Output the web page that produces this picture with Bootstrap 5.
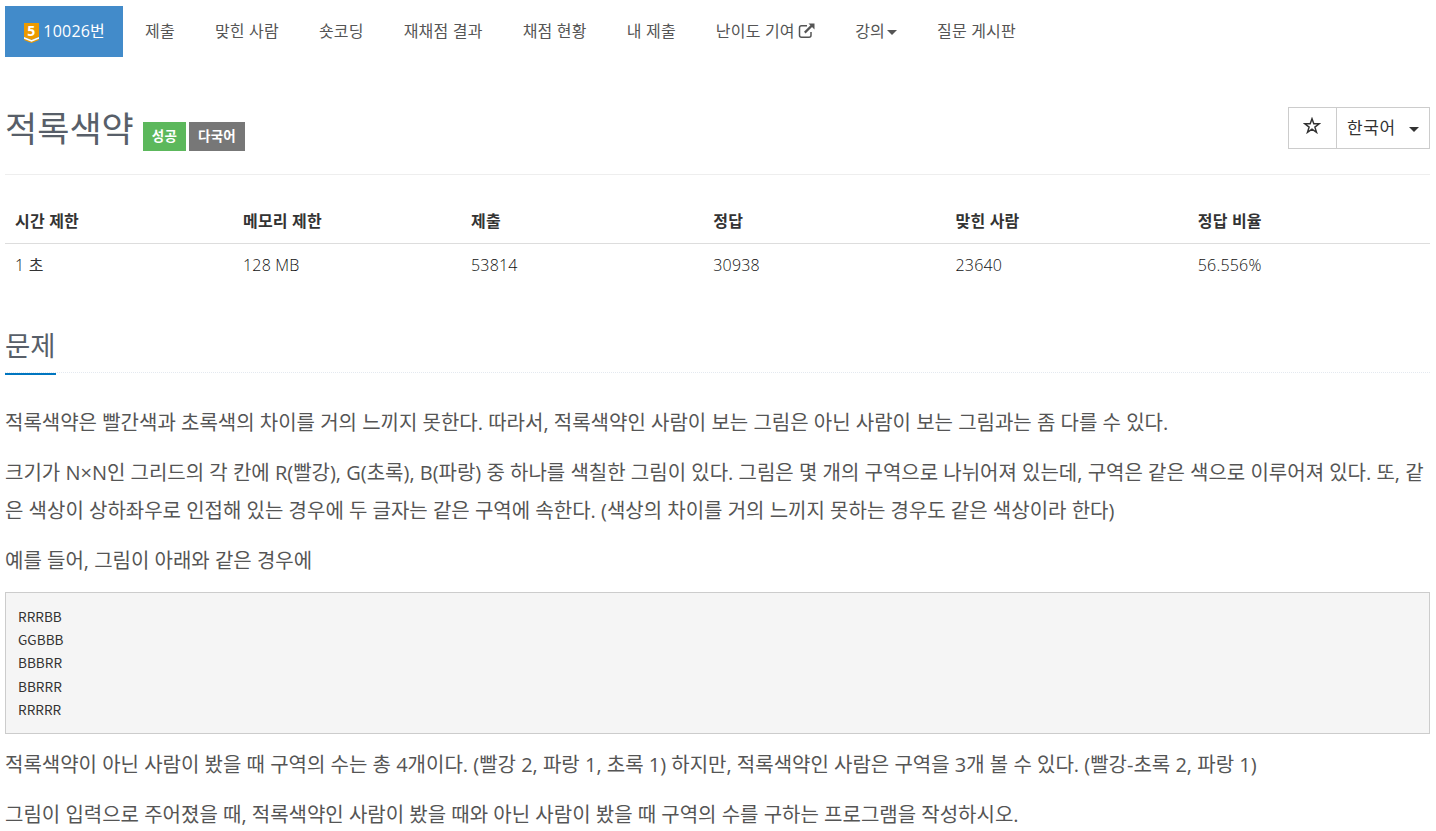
<!DOCTYPE html>
<html lang="ko">

<head>
  <meta charset="UTF-8">
  <meta name="viewport" content="width=device-width, initial-scale=1.0">
  <title>10026번: 적록색약</title>
  <link href="https://cdn.jsdelivr.net/npm/bootstrap@5.3.0/dist/css/bootstrap.min.css" rel="stylesheet">
  <style>
    body {
      font-family: "Open Sans", "Noto Sans CJK KR", sans-serif;
      font-size: 16px;
      color: #333;
      overflow: hidden;
    }

    .page-wrap {
      padding: 6px 6px 0 5px;
    }

    .problem-menu {
      --bs-nav-pills-border-radius: 0;
      --bs-nav-pills-link-active-bg: #428bca;
      --bs-nav-link-padding-x: 18px;
      --bs-nav-link-padding-y: 0;
      --bs-nav-link-color: #555;
      gap: 4px;
      letter-spacing: .2px;
    }

    .problem-menu .nav-link {
      height: 51px;
      line-height: 50px;
      white-space: nowrap;
    }

    .problem-menu .tier-icon {
      margin: 0 -1px 0 1px;
      overflow: visible;
      vertical-align: -6px;
    }

    .problem-menu .link-icon {
      margin-left: -1px;
      vertical-align: -2px;
    }

    .caret {
      display: inline-block;
      border: 5px solid transparent;
      border-top-color: currentColor;
      border-bottom: 0;
      vertical-align: middle;
    }

    .problem-menu .caret {
      margin-left: 2px;
    }

    .title-bar {
      height: 118px;
      border-bottom: 1px solid #eee;
    }

    .title-bar h1 {
      font-size: 35px;
      line-height: 40px;
      color: #585f69;
      margin: 52px 9px 0 0;
    }

    .title-label {
      font-size: 13.5px;
      font-weight: 600;
      line-height: 29px;
      height: 29px;
      padding: 0 9px;
      letter-spacing: .2px;
      color: #fff;
      margin: 65px 3px 0 0;
    }

    .label-ac {
      background: #5cb85c;
    }

    .label-lang {
      background: #777;
    }

    .title-bar .btn-group {
      margin-top: 50px;
    }

    .title-bar .btn {
      --bs-btn-border-color: #ccc;
      --bs-btn-color: #333;
      --bs-btn-border-radius: 0;
      --bs-btn-padding-y: 0;
      --bs-btn-padding-x: 10px;
      flex: none;
      height: 42px;
    }

    .title-bar .fav-btn {
      width: 49px;
      padding: 0 11px 2px 9px;
    }

    .title-bar .fav-btn svg {
      vertical-align: -1px;
    }

    .title-bar .lang-btn {
      width: 94px;
      font-size: 17px;
      text-align: left;
      letter-spacing: .6px;
      white-space: nowrap;
    }

    .lang-btn .caret {
      margin-left: 13px;
    }

    .info-table {
      --bs-table-color: #333;
      margin-top: 23px;
      table-layout: fixed;
    }

    .info-table th,
    .info-table td {
      padding: 0 10px;
      line-height: 24px;
      border: 0;
      vertical-align: middle;
    }

    .info-table th {
      height: 45px;
      padding-top: 2px;
      font-weight: 700;
      letter-spacing: .2px;
      border-bottom: 1px solid #ddd;
    }

    .info-table td {
      height: 43px;
      letter-spacing: .2px;
    }

    .info-table .fw-light {
      --bs-table-color: #111;
      color: #111;
    }

    .headline {
      margin-top: 37px;
      height: 50px;
      border-bottom: 1px dotted #e4e9f0;
    }

    .headline h2 {
      display: inline-block;
      height: 52px;
      margin: 0;
      font-size: 27.5px;
      line-height: 46px;
      color: #585f69;
      border-bottom: 2px solid #0076c0;
    }

    .problem-text {
      margin-top: 31px;
      font-size: 20px;
      line-height: 38px;
      color: #555;
    }

    .problem-text p {
      margin: 0 0 12px;
      white-space: nowrap;
    }

    .problem-text pre {
      height: 142px;
      margin: 0 0 12px;
      padding: 12px;
      border: 1px solid #ccc;
      background: #f5f5f5;
      color: #333;
      font: 400 13.6px/23.2px "Noto Sans CJK KR", sans-serif;
    }
  </style>
</head>

<body>
  <div class="page-wrap">
    <ul class="nav nav-pills problem-menu">
      <li class="nav-item">
        <a class="nav-link active" href="#"><svg class="tier-icon" width="16" height="20" viewBox="0 0 16 20">
            <path d="M0 0h15v14l-7.5 3L0 14z" fill="#ec9a00" />
            <path d="M0 15.5l7.5 3 7.5-3V17L7.5 20 0 17z" fill="#ec9a00" />
            <path d="M0 14l7.5 3 7.5-3v1.8l-7.5 3-7.5-3z" fill="#fff" />
            <text x="7.3" y="12.5" text-anchor="middle" font-family="Open Sans" font-size="14" font-weight="700" fill="#fff">5</text>
          </svg> 10026번</a>
      </li>
      <li class="nav-item"><a class="nav-link" href="#">제출</a></li>
      <li class="nav-item"><a class="nav-link" href="#">맞힌 사람</a></li>
      <li class="nav-item"><a class="nav-link" href="#">숏코딩</a></li>
      <li class="nav-item"><a class="nav-link" href="#">재채점 결과</a></li>
      <li class="nav-item"><a class="nav-link" href="#">채점 현황</a></li>
      <li class="nav-item"><a class="nav-link" href="#">내 제출</a></li>
      <li class="nav-item">
        <a class="nav-link" href="#">난이도 기여 <svg class="link-icon" width="17" height="16" viewBox="0 0 17 16" fill="none" stroke="#555" stroke-width="1.5">
            <path d="M9 2.8H3.5a2 2 0 0 0-2 2v7.4a2 2 0 0 0 2 2H11a2 2 0 0 0 2-2V9" />
            <path d="M6.8 9.6L14 2.4" stroke-width="2.2" />
            <path d="M10.5.5h6v6z" fill="#555" stroke="none" />
          </svg></a>
      </li>
      <li class="nav-item"><a class="nav-link" href="#">강의<span class="caret"></span></a></li>
      <li class="nav-item"><a class="nav-link" href="#">질문 게시판</a></li>
    </ul>

    <div class="title-bar d-flex align-items-start">
      <h1 class="fw-normal">적록색약</h1>
      <span class="title-label label-ac">성공</span>
      <span class="title-label label-lang">다국어</span>
      <div class="btn-group ms-auto">
        <button type="button" class="btn fav-btn"><svg width="18" height="17" viewBox="0 0 18 17">
            <path d="M9 1.8l1.8 5h5.4l-4.3 3.3 1.6 5.2L9 12.1l-4.5 3.2 1.6-5.2L1.8 6.8h5.4z" fill="none" stroke="#333" stroke-width="1.5" />
          </svg></button>
        <button type="button" class="btn lang-btn">한국어<span class="caret"></span></button>
      </div>
    </div>

    <table class="table info-table mb-0">
      <colgroup>
        <col style="width: 16%">
        <col style="width: 16%">
        <col style="width: 17%">
        <col style="width: 17%">
        <col style="width: 17%">
        <col style="width: 17%">
      </colgroup>
      <thead>
        <tr>
          <th>시간 제한</th>
          <th>메모리 제한</th>
          <th>제출</th>
          <th>정답</th>
          <th>맞힌 사람</th>
          <th>정답 비율</th>
        </tr>
      </thead>
      <tbody>
        <tr>
          <td><span class="fw-light">1</span> 초</td>
          <td class="fw-light">128 MB</td>
          <td class="fw-light">53814</td>
          <td class="fw-light">30938</td>
          <td class="fw-light">23640</td>
          <td class="fw-light">56.556%</td>
        </tr>
      </tbody>
    </table>

    <div class="headline">
      <h2 class="fw-normal">문제</h2>
    </div>

    <div class="problem-text">
      <p>적록색약은 빨간색과 초록색의 차이를 거의 느끼지 못한다. 따라서, 적록색약인 사람이 보는 그림은 아닌 사람이 보는 그림과는 좀 다를 수 있다.</p>
      <p>크기가 N×N인 그리드의 각 칸에 R(빨강), G(초록), B(파랑) 중 하나를 색칠한 그림이 있다. 그림은 몇 개의 구역으로 나뉘어져 있는데, 구역은 같은 색으로 이루어져 있다. 또, 같<br>은 색상이 상하좌우로 인접해 있는 경우에 두 글자는 같은 구역에 속한다. (색상의 차이를 거의 느끼지 못하는 경우도 같은 색상이라 한다)</p>
      <p>예를 들어, 그림이 아래와 같은 경우에</p>
      <pre>RRRBB
GGBBB
BBBRR
BBRRR
RRRRR</pre>
      <p>적록색약이 아닌 사람이 봤을 때 구역의 수는 총 4개이다. (빨강 2, 파랑 1, 초록 1) 하지만, 적록색약인 사람은 구역을 3개 볼 수 있다. (빨강-초록 2, 파랑 1)</p>
      <p>그림이 입력으로 주어졌을 때, 적록색약인 사람이 봤을 때와 아닌 사람이 봤을 때 구역의 수를 구하는 프로그램을 작성하시오.</p>
    </div>
  </div>
  <script src="https://cdn.jsdelivr.net/npm/bootstrap@5.3.0/dist/js/bootstrap.bundle.min.js"></script>
</body>

</html>
